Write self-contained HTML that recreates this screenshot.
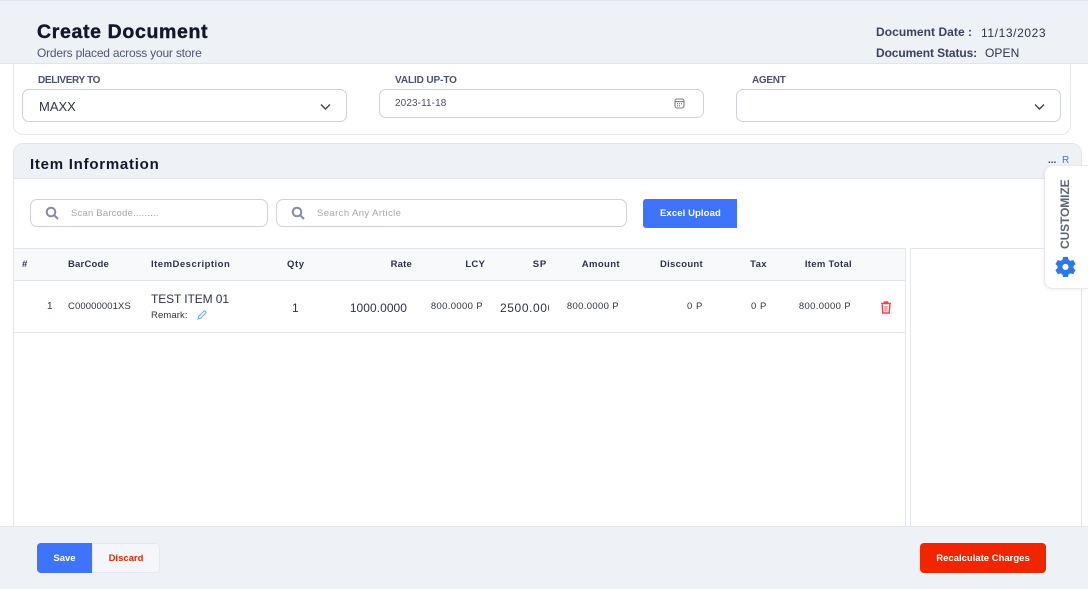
<!DOCTYPE html>
<html><head><meta charset="utf-8"><title>Create Document</title>
<style>
html,body{margin:0;padding:0;width:1088px;height:589px;overflow:hidden;background:#fff}
body{position:relative;font-family:"Liberation Sans",sans-serif;color:#2f3349}
.a{position:absolute;box-sizing:border-box}
.t{position:absolute;white-space:nowrap;line-height:14px}
.r{text-align:right}
.lb{font-size:10px;font-weight:bold;color:#4a5272;letter-spacing:-.1px}
.in{position:absolute;box-sizing:border-box;border:1px solid #cdd1de;border-radius:7px;background:#fff}
.th{font-size:9.5px;font-weight:bold;color:#2f3349;letter-spacing:.2px}
.td{font-size:9.5px;color:#2f3349;letter-spacing:.2px}
svg{position:absolute;display:block}
</style></head><body>
<div class="a" style="left:0;top:0;width:1088px;height:64px;background:#eef1f6;border-top:1px solid #e2e5ec;border-bottom:1px solid #e2e5ec"></div>
<div class="t" style="left:37px;top:22px;line-height:20px;font-size:19.5px;font-weight:bold;color:#14172b;letter-spacing:.65px;-webkit-text-stroke:.4px #14172b">Create Document</div>
<div class="t" style="left:37px;top:46px;font-size:12px;color:#4f5775;letter-spacing:-.2px">Orders placed across your store</div>
<div class="t" style="left:876px;top:25px;font-size:12px;font-weight:bold;color:#3a4260;letter-spacing:.05px">Document Date :</div>
<div class="t" style="left:981px;top:26px;font-size:12px;color:#2f3349;letter-spacing:.6px">11/13/2023</div>
<div class="t" style="left:876px;top:46px;font-size:12px;font-weight:bold;color:#3a4260;letter-spacing:-.1px">Document Status:</div>
<div class="t" style="left:985px;top:46px;font-size:12px;color:#2f3349;letter-spacing:.1px">OPEN</div>

<div class="a" style="left:13px;top:64px;width:1058px;height:71px;background:#fff;border:1px solid #e4e6ee;border-top:0;border-radius:0 0 10px 10px"></div>
<div class="t lb" style="left:38px;top:74px;letter-spacing:-.35px">DELIVERY TO</div>
<div class="t lb" style="left:395px;top:74px">VALID UP-TO</div>
<div class="t lb" style="left:752px;top:74px;letter-spacing:-.3px">AGENT</div>
<div class="in" style="left:22px;top:89px;width:325px;height:33px"></div>
<div class="t" style="left:39px;top:100px;font-size:13px;color:#2f3349">MAXX</div>
<svg style="left:320px;top:103px" width="11" height="8" viewBox="0 0 11 8"><path d="M1 1.500L5.500 6L10 1.500" fill="none" stroke="#3d4356" stroke-width="1.400"/></svg>
<div class="in" style="left:379px;top:89px;width:325px;height:29px"></div>
<div class="t" style="left:395px;top:97px;font-size:10px;color:#4a4f63;letter-spacing:.1px">2023-11-18</div>
<svg style="left:674px;top:98px" width="11" height="11" viewBox="0 0 11 11"><rect x="1" y="1" width="9" height="9" rx="2" fill="none" stroke="#7a7d87" stroke-width="1.100"/><path d="M1 3.600H10" stroke="#7a7d87" stroke-width="1.100"/><path d="M3 5.700h1M5 5.700h1M7 5.700h1M3 7.700h1M5 7.700h1" stroke="#555a68" stroke-width="1"/></svg>
<div class="in" style="left:736px;top:89px;width:325px;height:33px"></div>
<svg style="left:1034px;top:103px" width="11" height="8" viewBox="0 0 11 8"><path d="M1 1.500L5.500 6L10 1.500" fill="none" stroke="#3d4356" stroke-width="1.400"/></svg>

<div class="a" style="left:13px;top:143px;width:1069px;height:390px;background:#fff;border:1px solid #e2e5ec;border-radius:10px 10px 0 0"></div>
<div class="a" style="left:14px;top:144px;width:1067px;height:35px;background:#eef1f6;border-bottom:1px solid #e2e5ec;border-radius:9px 9px 0 0"></div>
<div class="t" style="left:30px;top:156px;line-height:18px;font-size:15px;font-weight:bold;color:#14172b;letter-spacing:.75px">Item Information</div>
<div class="t" style="left:1048px;top:154px;font-size:10px;font-weight:bold;color:#3a3f52">...</div>
<div class="t" style="left:1062px;top:154px;font-size:10px;color:#3d74f5">R</div>

<div class="in" style="left:30px;top:199px;width:238px;height:28px"></div>
<svg style="left:45px;top:206px" width="15" height="15" viewBox="0 0 15 15"><circle cx="6" cy="6" r="4.300" fill="none" stroke="#848ca6" stroke-width="2"/><path d="M9.300 9.300L13 13" stroke="#848ca6" stroke-width="2"/></svg>
<div class="t" style="left:71px;top:207px;font-size:9.500px;color:#a3a7b8;letter-spacing:.2px">Scan Barcode.........</div>
<div class="in" style="left:276px;top:199px;width:351px;height:28px"></div>
<svg style="left:291px;top:206px" width="15" height="15" viewBox="0 0 15 15"><circle cx="6" cy="6" r="4.300" fill="none" stroke="#848ca6" stroke-width="2"/><path d="M9.300 9.300L13 13" stroke="#848ca6" stroke-width="2"/></svg>
<div class="t" style="left:317px;top:207px;font-size:9.500px;color:#a3a7b8;letter-spacing:.4px">Search Any Article</div>
<div class="a" style="left:643px;top:199px;width:94px;height:29px;background:#3d74fb;border-radius:3px 0 0 3px"></div>
<div class="t" style="left:660px;top:207px;font-size:9.500px;font-weight:bold;color:#fff;letter-spacing:.1px">Excel Upload</div>

<div class="a" style="left:14px;top:248px;width:892px;height:33px;background:#f8f9fb;border-top:1px solid #e2e5ec;border-bottom:1px solid #e2e5ec"></div>
<div class="a" style="left:14px;top:332px;width:892px;height:1px;background:#e2e5ec"></div>
<div class="a" style="left:905px;top:248px;width:1px;height:280px;background:#e2e5ec"></div>
<div class="a" style="left:910px;top:248px;width:171px;height:1px;background:#e2e5ec"></div>
<div class="a" style="left:910px;top:248px;width:1px;height:280px;background:#e2e5ec"></div>

<div class="t th" style="left:22px;top:258px">#</div>
<div class="t th" style="left:68px;top:258px">BarCode</div>
<div class="t th" style="left:151px;top:258px;letter-spacing:.5px">ItemDescription</div>
<div class="t th" style="left:287px;top:258px;letter-spacing:.6px">Qty</div>
<div class="t th r" style="right:676px;top:258px">Rate</div>
<div class="t th r" style="right:603px;top:258px">LCY</div>
<div class="t th r" style="right:541px;top:258px;letter-spacing:.8px">SP</div>
<div class="t th r" style="right:468px;top:258px;letter-spacing:.4px">Amount</div>
<div class="t th r" style="right:385px;top:258px;letter-spacing:.3px">Discount</div>
<div class="t th r" style="right:321px;top:258px;letter-spacing:.4px">Tax</div>
<div class="t th r" style="right:236px;top:258px;letter-spacing:.3px">Item Total</div>

<div class="t td" style="left:47px;top:300px;font-size:10px">1</div>
<div class="t td" style="left:68px;top:300px;letter-spacing:.1px">C00000001XS</div>
<div class="t" style="left:151px;top:292px;font-size:12px;color:#2f3349;letter-spacing:-.1px">TEST ITEM 01</div>
<div class="t" style="left:151px;top:309px;font-size:9.500px;color:#2f3349;letter-spacing:.1px">Remark:</div>
<svg style="left:197px;top:310px" width="10" height="10" viewBox="0 0 10 10"><path d="M1 9L1.600 6.500L6.800 1.300a1 1 0 0 1 1.500 0l.4.4a1 1 0 0 1 0 1.500L3.500 8.400Z" fill="none" stroke="#6f9cf9" stroke-width="1"/></svg>
<div class="t" style="left:292px;top:301px;font-size:12px">1</div>
<div class="t r" style="right:681px;top:301px;font-size:12px;letter-spacing:.05px">1000.0000</div>
<div class="t td r" style="right:605px;top:300px;letter-spacing:.35px">800.0000 P</div>
<div class="a" style="left:500px;top:300px;width:49px;height:15px;overflow:hidden"><div class="t" style="left:0;top:1px;font-size:12px;letter-spacing:.6px">2500.0000</div></div>
<div class="t td r" style="right:469px;top:300px;letter-spacing:.35px">800.0000 P</div>
<div class="t td r" style="right:385px;top:300px;letter-spacing:.6px">0 P</div>
<div class="t td r" style="right:321px;top:300px;letter-spacing:.6px">0 P</div>
<div class="t td r" style="right:237px;top:300px;letter-spacing:.35px">800.0000 P</div>
<svg style="left:880px;top:301px" width="12" height="13" viewBox="0 0 12 13"><path d="M1 2.500H11M4.500 2.200V1H7.500V2.200" fill="none" stroke="#f4434c" stroke-width="1.500"/><path d="M2.200 3.500L2.800 12H9.200L9.800 3.500" fill="none" stroke="#f4434c" stroke-width="1.500"/><rect x="4.300" y="5" width="3.400" height="5.500" fill="#f9a5a8"/></svg>

<div class="a" style="left:1044px;top:165px;width:44px;height:124px;background:#fff;border:1px solid #e8eaf0;border-right:0;border-radius:9px 0 0 9px;box-shadow:-1px 1px 2px rgba(40,50,80,.06)"></div>
<div class="t" style="left:1031px;top:208px;width:68px;text-align:center;transform:rotate(-90deg);font-size:12px;font-weight:bold;color:#5f6579;letter-spacing:-.1px">CUSTOMIZE</div>
<svg style="left:1055px;top:256px" width="21" height="21" viewBox="0 0 24 24"><path fill="#2c78e4" fill-rule="evenodd" d="M9.300 1h5.400l.8 3.300 2.100 1.200 3.200-1 2.700 4.700-2.400 2.300v2.400l2.400 2.300-2.700 4.700-3.200-1-2.100 1.200-.8 3.300H9.300l-.8-3.300-2.100-1.200-3.200 1L.5 16.200l2.400-2.300v-2.400L.5 9.200l2.700-4.700 3.200 1 2.100-1.200ZM12 9a3.500 3.500 0 1 0 0 7 3.500 3.500 0 0 0 0-7Z"/></svg>

<div class="a" style="left:0;top:526px;width:1088px;height:63px;background:#eef1f6;border-top:1px solid #e2e5ec"></div>
<div class="a" style="left:37px;top:543px;width:55px;height:30px;background:#3d74fb;border-radius:4px 0 0 4px"></div>
<div class="t" style="left:37px;top:552px;width:55px;text-align:center;font-size:9.500px;font-weight:bold;color:#fff">Save</div>
<div class="a" style="left:92px;top:543px;width:68px;height:30px;background:#f5f6fb;border:1px solid #e6e8ef;border-radius:0 4px 4px 0"></div>
<div class="t" style="left:92px;top:552px;width:68px;text-align:center;font-size:9.500px;font-weight:bold;color:#f12500">Discard</div>
<div class="a" style="left:920px;top:543px;width:126px;height:30px;background:#f12500;border-radius:4px"></div>
<div class="t" style="left:920px;top:552px;width:126px;text-align:center;font-size:9.500px;font-weight:bold;color:#fff">Recalculate Charges</div>
</body></html>
